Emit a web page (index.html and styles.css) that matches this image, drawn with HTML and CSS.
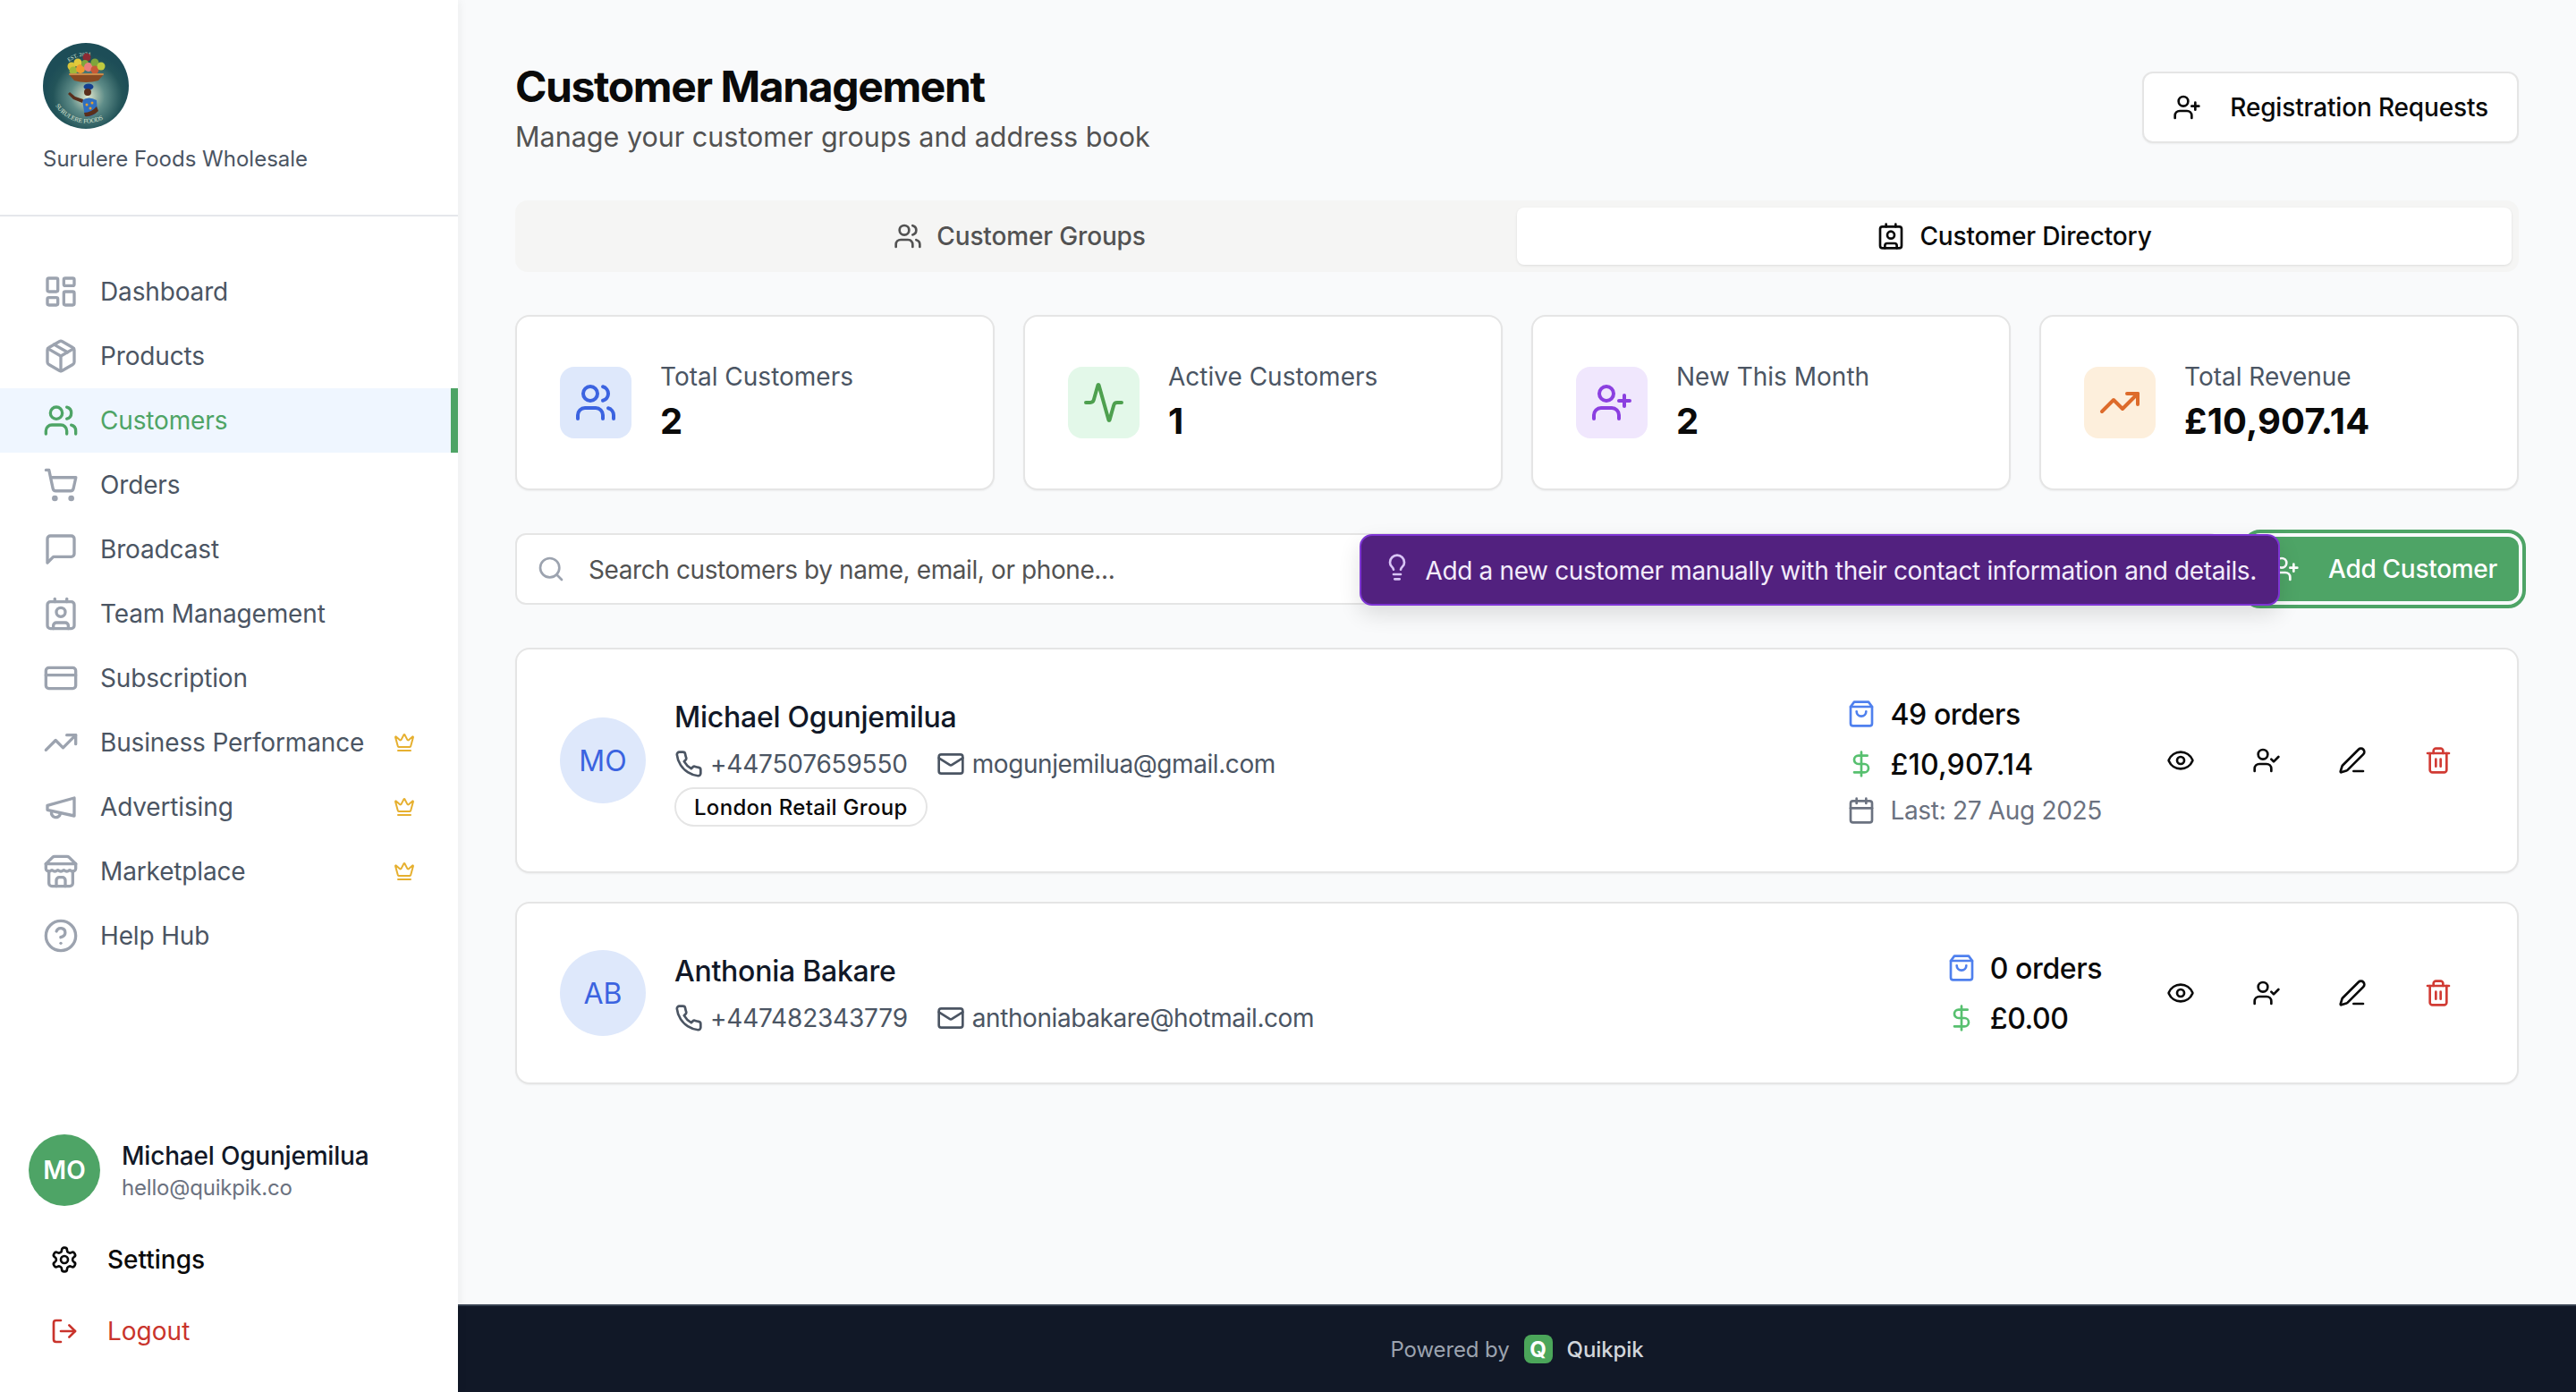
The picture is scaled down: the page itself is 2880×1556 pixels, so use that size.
FILE: index.html
```html
<!DOCTYPE html>
<html lang="en">
<head>
    <meta charset="UTF-8">
    <meta name="viewport" content="width=device-width, initial-scale=1.0">
    <title>Customer Management</title>
    <link rel="stylesheet" href="styles.css">
</head>
<body>
    <!-- Icon sprite -->
    <svg class="sprite" xmlns="http://www.w3.org/2000/svg">
        <symbol id="i-dashboard" viewBox="0 0 24 24"><rect width="7" height="9" x="3" y="3" rx="1"/><rect width="7" height="5" x="14" y="3" rx="1"/><rect width="7" height="9" x="14" y="12" rx="1"/><rect width="7" height="5" x="3" y="16" rx="1"/></symbol>
        <symbol id="i-package" viewBox="0 0 24 24"><path d="m7.5 4.27 9 5.15"/><path d="M21 8a2 2 0 0 0-1-1.73l-7-4a2 2 0 0 0-2 0l-7 4A2 2 0 0 0 3 8v8a2 2 0 0 0 1 1.73l7 4a2 2 0 0 0 2 0l7-4A2 2 0 0 0 21 16Z"/><path d="m3.3 7 8.7 5 8.7-5"/><path d="M12 22V12"/></symbol>
        <symbol id="i-users" viewBox="0 0 24 24"><path d="M16 21v-2a4 4 0 0 0-4-4H6a4 4 0 0 0-4 4v2"/><circle cx="9" cy="7" r="4"/><path d="M22 21v-2a4 4 0 0 0-3-3.87"/><path d="M16 3.13a4 4 0 0 1 0 7.75"/></symbol>
        <symbol id="i-cart" viewBox="0 0 24 24"><circle cx="8" cy="21" r="1"/><circle cx="19" cy="21" r="1"/><path d="M2.05 2.05h2l2.66 12.42a2 2 0 0 0 2 1.58h9.78a2 2 0 0 0 1.95-1.57l1.65-7.43H5.12"/></symbol>
        <symbol id="i-message" viewBox="0 0 24 24"><path d="M21 15a2 2 0 0 1-2 2H7l-4 4V5a2 2 0 0 1 2-2h14a2 2 0 0 1 2 2z"/></symbol>
        <symbol id="i-contact" viewBox="0 0 24 24"><path d="M16 2v2"/><path d="M7 22v-2a2 2 0 0 1 2-2h6a2 2 0 0 1 2 2v2"/><path d="M8 2v2"/><circle cx="12" cy="11" r="3"/><rect width="18" height="18" x="3" y="4" rx="2"/></symbol>
        <symbol id="i-card" viewBox="0 0 24 24"><rect width="20" height="14" x="2" y="5" rx="2"/><line x1="2" x2="22" y1="10" y2="10"/></symbol>
        <symbol id="i-trending" viewBox="0 0 24 24"><polyline points="22 7 13.5 15.5 8.5 10.5 2 17"/><polyline points="16 7 22 7 22 13"/></symbol>
        <symbol id="i-megaphone" viewBox="0 0 24 24"><path d="m3 11 18-5v12L3 14v-3z"/><path d="M11.6 16.8a3 3 0 1 1-5.8-1.6"/></symbol>
        <symbol id="i-store" viewBox="0 0 24 24"><path d="m2 7 4.41-4.41A2 2 0 0 1 7.83 2h8.34a2 2 0 0 1 1.42.59L22 7"/><path d="M4 12v8a2 2 0 0 0 2 2h12a2 2 0 0 0 2-2v-8"/><path d="M15 22v-4a2 2 0 0 0-2-2h-2a2 2 0 0 0-2 2v4"/><path d="M2 7h20"/><path d="M22 7v3a2 2 0 0 1-2 2a2.7 2.7 0 0 1-1.59-.63.7.7 0 0 0-.82 0A2.7 2.7 0 0 1 16 12a2.7 2.7 0 0 1-1.59-.63.7.7 0 0 0-.82 0A2.7 2.7 0 0 1 12 12a2.7 2.7 0 0 1-1.59-.63.7.7 0 0 0-.82 0A2.7 2.7 0 0 1 8 12a2.7 2.7 0 0 1-1.59-.63.7.7 0 0 0-.82 0A2.7 2.7 0 0 1 4 12a2 2 0 0 1-2-2V7"/></symbol>
        <symbol id="i-help" viewBox="0 0 24 24"><circle cx="12" cy="12" r="10"/><path d="M9.09 9a3 3 0 0 1 5.83 1c0 2-3 3-3 3"/><path d="M12 17h.01"/></symbol>
        <symbol id="i-crown" viewBox="0 0 24 24"><path d="M11.562 3.266a.5.5 0 0 1 .876 0L15.39 8.87a1 1 0 0 0 1.516.294L21.183 5.5a.5.5 0 0 1 .798.519l-2.834 10.246a1 1 0 0 1-.956.734H5.81a1 1 0 0 1-.957-.734L2.02 6.02a.5.5 0 0 1 .798-.519l4.276 3.664a1 1 0 0 0 1.516-.294z"/><path d="M5 21h14"/></symbol>
        <symbol id="i-settings" viewBox="0 0 24 24"><path d="M12.22 2h-.44a2 2 0 0 0-2 2v.18a2 2 0 0 1-1 1.73l-.43.25a2 2 0 0 1-2 0l-.15-.08a2 2 0 0 0-2.73.73l-.22.38a2 2 0 0 0 .73 2.73l.15.1a2 2 0 0 1 1 1.72v.51a2 2 0 0 1-1 1.74l-.15.09a2 2 0 0 0-.73 2.73l.22.38a2 2 0 0 0 2.73.73l.15-.08a2 2 0 0 1 2 0l.43.25a2 2 0 0 1 1 1.73V20a2 2 0 0 0 2 2h.44a2 2 0 0 0 2-2v-.18a2 2 0 0 1 1-1.73l.43-.25a2 2 0 0 1 2 0l.15.08a2 2 0 0 0 2.73-.73l.22-.39a2 2 0 0 0-.73-2.73l-.15-.08a2 2 0 0 1-1-1.74v-.5a2 2 0 0 1 1-1.74l.15-.09a2 2 0 0 0 .73-2.73l-.22-.38a2 2 0 0 0-2.73-.73l-.15.08a2 2 0 0 1-2 0l-.43-.25a2 2 0 0 1-1-1.73V4a2 2 0 0 0-2-2z"/><circle cx="12" cy="12" r="3"/></symbol>
        <symbol id="i-logout" viewBox="0 0 24 24"><path d="M9 21H5a2 2 0 0 1-2-2V5a2 2 0 0 1 2-2h4"/><polyline points="16 17 21 12 16 7"/><line x1="21" x2="9" y1="12" y2="12"/></symbol>
        <symbol id="i-user-plus" viewBox="0 0 24 24"><path d="M16 21v-2a4 4 0 0 0-4-4H6a4 4 0 0 0-4 4v2"/><circle cx="9" cy="7" r="4"/><line x1="19" x2="19" y1="8" y2="14"/><line x1="22" x2="16" y1="11" y2="11"/></symbol>
        <symbol id="i-user-check" viewBox="0 0 24 24"><path d="M16 21v-2a4 4 0 0 0-4-4H6a4 4 0 0 0-4 4v2"/><circle cx="9" cy="7" r="4"/><polyline points="16 11 18 13 22 9"/></symbol>
        <symbol id="i-activity" viewBox="0 0 24 24"><path d="M22 12h-2.48a2 2 0 0 0-1.93 1.46l-2.35 8.36a.25.25 0 0 1-.48 0L9.24 2.18a.25.25 0 0 0-.48 0l-2.35 8.36A2 2 0 0 1 4.49 12H2"/></symbol>
        <symbol id="i-search" viewBox="0 0 24 24"><circle cx="11" cy="11" r="8"/><path d="m21 21-4.3-4.3"/></symbol>
        <symbol id="i-bulb" viewBox="0 0 24 24"><path d="M15 14c.2-1 .7-1.7 1.5-2.5 1-.9 1.5-2.2 1.5-3.5A6 6 0 0 0 6 8c0 1 .2 2.2 1.5 3.5.7.7 1.3 1.5 1.5 2.5"/><path d="M9 18h6"/><path d="M10 22h4"/></symbol>
        <symbol id="i-phone" viewBox="0 0 24 24"><path d="M22 16.92v3a2 2 0 0 1-2.18 2 19.79 19.79 0 0 1-8.63-3.07 19.5 19.5 0 0 1-6-6 19.79 19.79 0 0 1-3.07-8.67A2 2 0 0 1 4.11 2h3a2 2 0 0 1 2 1.72 12.84 12.84 0 0 0 .7 2.81 2 2 0 0 1-.45 2.11L8.09 9.91a16 16 0 0 0 6 6l1.27-1.27a2 2 0 0 1 2.11-.45 12.84 12.84 0 0 0 2.81.7A2 2 0 0 1 22 16.92z"/></symbol>
        <symbol id="i-mail" viewBox="0 0 24 24"><rect width="20" height="16" x="2" y="4" rx="2"/><path d="m22 7-8.97 5.7a1.94 1.94 0 0 1-2.06 0L2 7"/></symbol>
        <symbol id="i-bag" viewBox="0 0 24 24"><path d="M6 2 3 6v14a2 2 0 0 0 2 2h14a2 2 0 0 0 2-2V6l-3-4Z"/><path d="M3 6h18"/><path d="M16 10a4 4 0 0 1-8 0"/></symbol>
        <symbol id="i-dollar" viewBox="0 0 24 24"><line x1="12" x2="12" y1="2" y2="22"/><path d="M17 5H9.5a3.5 3.5 0 0 0 0 7h5a3.5 3.5 0 0 1 0 7H6"/></symbol>
        <symbol id="i-calendar" viewBox="0 0 24 24"><path d="M8 2v4"/><path d="M16 2v4"/><rect width="18" height="18" x="3" y="4" rx="2"/><path d="M3 10h18"/></symbol>
        <symbol id="i-eye" viewBox="0 0 24 24"><path d="M2.062 12.348a1 1 0 0 1 0-.696 10.75 10.75 0 0 1 19.876 0 1 1 0 0 1 0 .696 10.75 10.75 0 0 1-19.876 0"/><circle cx="12" cy="12" r="3"/></symbol>
        <symbol id="i-pen" viewBox="0 0 24 24"><path d="M13 21h8"/><path d="M21.174 6.812a1 1 0 0 0-3.986-3.987L3.842 16.174a2 2 0 0 0-.5.83l-1.321 4.352a.5.5 0 0 0 .623.622l4.353-1.32a2 2 0 0 0 .83-.497z"/></symbol>
        <symbol id="i-trash" viewBox="0 0 24 24"><path d="M3 6h18"/><path d="M19 6v14c0 1-1 2-2 2H7c-1 0-2-1-2-2V6"/><path d="M8 6V4c0-1 1-2 2-2h4c1 0 2 1 2 2v2"/><line x1="10" x2="10" y1="11" y2="17"/><line x1="14" x2="14" y1="11" y2="17"/></symbol>
    </svg>

    <div class="app">
        <aside class="sidebar">
            <div class="brand">
                <svg class="brand-logo" viewBox="0 0 96 96" xmlns="http://www.w3.org/2000/svg">
                    <defs>
                        <radialGradient id="logo-bg" cx="52%" cy="62%" r="50%">
                            <stop offset="0" stop-color="#dfe6cc"/>
                            <stop offset="0.4" stop-color="#5e8c88"/>
                            <stop offset="0.8" stop-color="#235459"/>
                            <stop offset="1" stop-color="#1d4d57"/>
                        </radialGradient>
                        <path id="logo-top" d="M29 21 A32 32 0 0 1 68 21"/>
                        <path id="logo-bottom" d="M14 70 A41 41 0 0 0 85 68"/>
                    </defs>
                    <circle cx="48" cy="48" r="48" fill="url(#logo-bg)"/>
                    <text class="logo-text" font-size="6"><textPath href="#logo-top">EST. 2024</textPath></text>
                    <circle cx="32" cy="26" r="4.5" fill="#d9c53a"/>
                    <circle cx="34" cy="31" r="4.5" fill="#9fb83a"/>
                    <circle cx="39" cy="22" r="4.5" fill="#e2c93b"/>
                    <circle cx="42" cy="29" r="5" fill="#ee9b2e"/>
                    <circle cx="49" cy="16" r="4.5" fill="#8c2a33"/>
                    <circle cx="47" cy="23" r="4" fill="#7fa53b"/>
                    <circle cx="51" cy="27" r="5" fill="#e87e7e"/>
                    <circle cx="58" cy="22" r="4.5" fill="#7fa53b"/>
                    <circle cx="58" cy="30" r="4.5" fill="#c85a36"/>
                    <circle cx="65" cy="26" r="4.5" fill="#bfca3f"/>
                    <path d="M29 35 H68 L62 42 Q48 46 35 42 Z" fill="#8a4a22"/>
                    <rect x="29" y="34" width="39" height="2" rx="1" fill="#c98a4a"/>
                    <ellipse cx="51" cy="49" rx="5.5" ry="3.5" fill="#143f8f"/>
                    <circle cx="50" cy="55" r="4" fill="#5a2f1c"/>
                    <path d="M44 64 Q51 59 60 64 L61 76 Q56 84 47 82 Z" fill="#2f6fc0"/>
                    <path d="M44 67 L34 63 L28 57 L30 55 L36 60 L45 63 Z" fill="#5a2f1c"/>
                    <path d="M46 78 Q54 78 60 71 L62 76 Q55 83 47 82 Z" fill="#5a2f1c"/>
                    <circle cx="49" cy="69" r="1.5" fill="#e6a02c"/>
                    <circle cx="55" cy="67" r="1.5" fill="#e6a02c"/>
                    <circle cx="53" cy="73" r="1.5" fill="#e6a02c"/>
                    <text class="logo-text" font-size="7"><textPath href="#logo-bottom">SURULERE FOODS</textPath></text>
                </svg>
                <p class="brand-name">Surulere Foods Wholesale</p>
            </div>

            <nav class="nav">
                <a class="nav-item"><svg class="icon"><use href="#i-dashboard"/></svg><span>Dashboard</span></a>
                <a class="nav-item"><svg class="icon"><use href="#i-package"/></svg><span>Products</span></a>
                <a class="nav-item active"><svg class="icon"><use href="#i-users"/></svg><span>Customers</span></a>
                <a class="nav-item"><svg class="icon"><use href="#i-cart"/></svg><span>Orders</span></a>
                <a class="nav-item"><svg class="icon"><use href="#i-message"/></svg><span>Broadcast</span></a>
                <a class="nav-item"><svg class="icon"><use href="#i-contact"/></svg><span>Team Management</span></a>
                <a class="nav-item"><svg class="icon"><use href="#i-card"/></svg><span>Subscription</span></a>
                <a class="nav-item"><svg class="icon"><use href="#i-trending"/></svg><span>Business Performance</span><svg class="crown"><use href="#i-crown"/></svg></a>
                <a class="nav-item"><svg class="icon"><use href="#i-megaphone"/></svg><span>Advertising</span><svg class="crown"><use href="#i-crown"/></svg></a>
                <a class="nav-item"><svg class="icon"><use href="#i-store"/></svg><span>Marketplace</span><svg class="crown"><use href="#i-crown"/></svg></a>
                <a class="nav-item"><svg class="icon"><use href="#i-help"/></svg><span>Help Hub</span></a>
            </nav>

            <div class="account">
                <div class="profile">
                    <div class="profile-avatar">MO</div>
                    <div>
                        <div class="profile-name">Michael Ogunjemilua</div>
                        <div class="profile-email">hello@quikpik.co</div>
                    </div>
                </div>
                <a class="account-link"><svg class="icon-sm"><use href="#i-settings"/></svg><span>Settings</span></a>
                <a class="account-link logout"><svg class="icon-sm"><use href="#i-logout"/></svg><span>Logout</span></a>
            </div>
        </aside>

        <div class="main">
            <main class="content">
                <header class="page-header">
                    <div>
                        <h1>Customer Management</h1>
                        <p class="subtitle">Manage your customer groups and address book</p>
                    </div>
                    <button class="btn-outline"><svg class="icon-sm"><use href="#i-user-plus"/></svg>Registration Requests</button>
                </header>

                <div class="tabs">
                    <div class="tab"><svg class="icon-sm"><use href="#i-users"/></svg>Customer Groups</div>
                    <div class="tab active"><svg class="icon-sm"><use href="#i-contact"/></svg>Customer Directory</div>
                </div>

                <section class="stats">
                    <div class="stat-card">
                        <div class="stat-icon blue"><svg class="icon-lg"><use href="#i-users"/></svg></div>
                        <div><div class="stat-label">Total Customers</div><div class="stat-value">2</div></div>
                    </div>
                    <div class="stat-card">
                        <div class="stat-icon green"><svg class="icon-lg"><use href="#i-activity"/></svg></div>
                        <div><div class="stat-label">Active Customers</div><div class="stat-value">1</div></div>
                    </div>
                    <div class="stat-card">
                        <div class="stat-icon purple"><svg class="icon-lg"><use href="#i-user-plus"/></svg></div>
                        <div><div class="stat-label">New This Month</div><div class="stat-value">2</div></div>
                    </div>
                    <div class="stat-card">
                        <div class="stat-icon orange"><svg class="icon-lg"><use href="#i-trending"/></svg></div>
                        <div><div class="stat-label">Total Revenue</div><div class="stat-value">£10,907.14</div></div>
                    </div>
                </section>

                <div class="toolbar">
                    <div class="search">
                        <svg class="icon-sm"><use href="#i-search"/></svg>
                        <span>Search customers by name, email, or phone...</span>
                    </div>
                    <div class="add-wrap">
                        <button class="btn-add"><svg class="icon-sm"><use href="#i-user-plus"/></svg>Add Customer</button>
                        <div class="tooltip">
                            <svg class="icon-sm"><use href="#i-bulb"/></svg>
                            <span>Add a new customer manually with their contact information and details.</span>
                        </div>
                    </div>
                </div>

                <section class="customers">
                    <article class="customer-card">
                        <div class="customer-avatar">MO</div>
                        <div class="customer-info">
                            <div class="customer-name">Michael Ogunjemilua</div>
                            <div class="customer-contact">
                                <span class="contact-item phone"><svg class="icon-sm"><use href="#i-phone"/></svg>+447507659550</span>
                                <span class="contact-item email"><svg class="icon-sm"><use href="#i-mail"/></svg>mogunjemilua@gmail.com</span>
                            </div>
                            <span class="badge">London Retail Group</span>
                        </div>
                        <div class="customer-stats">
                            <div class="metric"><svg class="icon-sm bag"><use href="#i-bag"/></svg>49 orders</div>
                            <div class="metric total"><svg class="icon-sm dollar"><use href="#i-dollar"/></svg>£10,907.14</div>
                            <div class="metric last"><svg class="icon-sm"><use href="#i-calendar"/></svg>Last: 27 Aug 2025</div>
                        </div>
                        <div class="actions">
                            <button class="action"><svg class="icon-sm"><use href="#i-eye"/></svg></button>
                            <button class="action"><svg class="icon-sm"><use href="#i-user-check"/></svg></button>
                            <button class="action"><svg class="icon-sm"><use href="#i-pen"/></svg></button>
                            <button class="action danger"><svg class="icon-sm"><use href="#i-trash"/></svg></button>
                        </div>
                    </article>

                    <article class="customer-card">
                        <div class="customer-avatar">AB</div>
                        <div class="customer-info">
                            <div class="customer-name">Anthonia Bakare</div>
                            <div class="customer-contact">
                                <span class="contact-item phone"><svg class="icon-sm"><use href="#i-phone"/></svg>+447482343779</span>
                                <span class="contact-item email"><svg class="icon-sm"><use href="#i-mail"/></svg>anthoniabakare@hotmail.com</span>
                            </div>
                        </div>
                        <div class="customer-stats">
                            <div class="metric"><svg class="icon-sm bag"><use href="#i-bag"/></svg>0 orders</div>
                            <div class="metric"><svg class="icon-sm dollar"><use href="#i-dollar"/></svg>£0.00</div>
                        </div>
                        <div class="actions">
                            <button class="action"><svg class="icon-sm"><use href="#i-eye"/></svg></button>
                            <button class="action"><svg class="icon-sm"><use href="#i-user-check"/></svg></button>
                            <button class="action"><svg class="icon-sm"><use href="#i-pen"/></svg></button>
                            <button class="action danger"><svg class="icon-sm"><use href="#i-trash"/></svg></button>
                        </div>
                    </article>
                </section>
            </main>

            <footer class="footer">
                <span class="powered">Powered by</span>
                <span class="footer-logo">Q</span>
                <span class="footer-brand">Quikpik</span>
            </footer>
        </div>
    </div>
</body>
</html>
```

FILE: styles.css
```css
* {
    box-sizing: border-box;
}

body {
    font-family: Inter, "Liberation Sans", sans-serif;
    background: #f9fafb;
    color: #0a0a0a;
    margin: 0;
    height: 100vh;
    overflow: hidden;
}

h1, p {
    margin: 0;
}

button {
    font-family: inherit;
    cursor: pointer;
}

.sprite {
    display: none;
}

.icon, .icon-sm, .icon-lg, .crown {
    fill: none;
    stroke: currentColor;
    stroke-width: 2;
    stroke-linecap: round;
    stroke-linejoin: round;
    flex-shrink: 0;
}

.icon {
    width: 40px;
    height: 40px;
    color: #9ca3af;
}

.icon-sm {
    width: 32px;
    height: 32px;
}

.icon-lg {
    width: 48px;
    height: 48px;
}

.app {
    display: flex;
    height: 100%;
}

/* Sidebar */
.sidebar {
    width: 512px;
    flex-shrink: 0;
    background: white;
    display: flex;
    flex-direction: column;
    box-shadow: 2px 0 10px rgba(0, 0, 0, 0.05);
    z-index: 1;
}

.brand {
    height: 242px;
    padding: 48px 48px 0;
    border-bottom: 2px solid #e5e7eb;
}

.brand-logo {
    display: block;
    width: 96px;
    height: 96px;
}

.logo-text {
    font-family: "Liberation Serif", serif;
    fill: #dfe8d8;
}

.brand-name {
    margin-top: 18px;
    font-size: 24px;
    line-height: 32px;
    color: #4b5563;
}

.nav {
    padding-top: 48px;
}

.nav-item {
    display: flex;
    align-items: center;
    gap: 24px;
    height: 72px;
    padding: 0 48px;
    font-size: 28px;
    letter-spacing: -0.15px;
    color: #4b5563;
}

.nav-item.active {
    background: #eff6ff;
    color: #4ea466;
    border-right: 8px solid #4ea466;
}

.nav-item.active .icon {
    color: #4ea466;
}

.crown {
    width: 24px;
    height: 24px;
    margin-left: auto;
    color: #e6b030;
}

.account {
    margin-top: auto;
    padding: 0 32px 28px;
}

.profile {
    display: flex;
    align-items: center;
    gap: 24px;
    margin-bottom: 20px;
}

.profile-avatar {
    width: 80px;
    height: 80px;
    border-radius: 50%;
    background: #4ea466;
    color: white;
    font-size: 28px;
    font-weight: 600;
    display: flex;
    align-items: center;
    justify-content: center;
}

.profile-name {
    font-size: 28px;
    line-height: 40px;
    font-weight: 500;
    letter-spacing: -0.2px;
    color: #111827;
}

.profile-email {
    font-size: 24px;
    line-height: 32px;
    letter-spacing: -0.2px;
    color: #6b7280;
}

.account-link {
    display: flex;
    align-items: center;
    gap: 32px;
    height: 80px;
    padding: 0 24px;
    font-size: 28px;
    font-weight: 500;
}

.account-link.logout {
    color: #c9342c;
    font-weight: 400;
}

/* Main column */
.main {
    flex: 1;
    min-width: 0;
    display: flex;
    flex-direction: column;
}

.content {
    flex: 1;
    padding: 64px 64px 0;
}

.page-header {
    display: flex;
    justify-content: space-between;
    align-items: center;
    margin-bottom: 48px;
}

h1 {
    font-size: 48px;
    line-height: 66px;
    font-weight: 700;
    letter-spacing: -1.4px;
}

.subtitle {
    font-size: 30.5px;
    line-height: 46px;
    color: #525252;
}

.btn-outline {
    display: flex;
    align-items: center;
    gap: 32px;
    height: 80px;
    padding: 0 32px;
    background: white;
    border: 2px solid #e5e5e5;
    border-radius: 12px;
    box-shadow: 0 1px 2px rgba(0, 0, 0, 0.05);
    font-size: 28px;
    font-weight: 500;
    letter-spacing: -0.15px;
    color: #0a0a0a;
}

.tabs {
    display: grid;
    grid-template-columns: 1fr 1fr;
    height: 80px;
    padding: 8px;
    background: #f5f5f4;
    border-radius: 14px;
    margin-bottom: 48px;
}

.tab {
    display: flex;
    align-items: center;
    justify-content: center;
    gap: 16px;
    font-size: 28px;
    font-weight: 500;
    letter-spacing: -0.15px;
    color: #525252;
    border-radius: 8px;
}

.tab.active {
    background: white;
    color: #0a0a0a;
    box-shadow: 0 1px 3px rgba(0, 0, 0, 0.1);
}

.stats {
    display: grid;
    grid-template-columns: repeat(4, 1fr);
    gap: 32px;
    margin-bottom: 48px;
}

.stat-card {
    display: flex;
    align-items: center;
    gap: 32px;
    height: 196px;
    padding: 0 48px;
    background: white;
    border: 2px solid #e5e5e5;
    border-radius: 16px;
    box-shadow: 0 1px 2px rgba(0, 0, 0, 0.05);
}

.stat-icon {
    width: 80px;
    height: 80px;
    border-radius: 16px;
    display: flex;
    align-items: center;
    justify-content: center;
}

.stat-icon.blue {
    background: #dee8fb;
    color: #3b63e0;
}

.stat-icon.green {
    background: #e3f8e9;
    color: #4ea04f;
}

.stat-icon.purple {
    background: #f0e7fd;
    color: #8b3fe0;
}

.stat-icon.orange {
    background: #fdefdc;
    color: #dd6b2b;
}

.stat-label {
    font-size: 28px;
    line-height: 42px;
    color: #4b5563;
}

.stat-value {
    font-size: 40px;
    line-height: 58px;
    font-weight: 700;
    letter-spacing: 0.14px;
}

.toolbar {
    display: flex;
    gap: 32px;
    margin-bottom: 48px;
}

.search {
    flex: 1;
    display: flex;
    align-items: center;
    gap: 26px;
    height: 80px;
    padding: 2px 22px 0;
    background: white;
    border: 2px solid #e5e5e5;
    border-radius: 12px;
    font-size: 28px;
    letter-spacing: -0.4px;
    color: #525252;
}

.search .icon-sm {
    color: #9ca3af;
    margin-top: -2px;
}

.add-wrap {
    position: relative;
    display: flex;
    align-items: center;
}

.btn-add {
    display: flex;
    align-items: center;
    gap: 32px;
    height: 72px;
    padding: 0 24px;
    background: #4ea466;
    border: none;
    border-radius: 12px;
    outline: 4px solid #4ea466;
    outline-offset: 4px;
    font-size: 28px;
    font-weight: 500;
    letter-spacing: -0.3px;
    color: white;
}

.tooltip {
    position: absolute;
    right: 267px;
    top: 1px;
    display: flex;
    align-items: flex-start;
    gap: 16px;
    height: 80px;
    padding: 19px 24px 0;
    background: #52217f;
    border: 2px solid #7e35d4;
    border-radius: 14px;
    box-shadow: 0 10px 24px rgba(0, 0, 0, 0.12);
    font-size: 28px;
    line-height: 40px;
    letter-spacing: -0.36px;
    white-space: nowrap;
    color: #f3ecfc;
}

.tooltip .icon-sm {
    color: #d8c4f5;
}

.customers {
    display: flex;
    flex-direction: column;
    gap: 32px;
}

.customer-card {
    display: flex;
    align-items: center;
    padding: 48px;
    background: white;
    border: 2px solid #e5e5e5;
    border-radius: 16px;
    box-shadow: 0 1px 2px rgba(0, 0, 0, 0.05);
}

.customer-avatar {
    width: 96px;
    height: 96px;
    border-radius: 50%;
    background: #dee8fb;
    color: #3b63e0;
    font-size: 32px;
    display: flex;
    align-items: center;
    justify-content: center;
    margin-right: 32px;
    flex-shrink: 0;
}

.customer-info {
    flex: 1;
    min-width: 0;
}

.customer-name {
    font-size: 32px;
    line-height: 56px;
    font-weight: 500;
    letter-spacing: -0.25px;
    color: #111827;
}

.customer-contact {
    display: flex;
    gap: 32px;
    height: 48px;
    align-items: center;
    font-size: 28px;
    color: #4b5563;
}

.contact-item {
    display: flex;
    align-items: center;
    gap: 8px;
}

.contact-item.phone {
    letter-spacing: -0.2px;
}

.contact-item.email {
    letter-spacing: -0.42px;
}

.badge {
    display: flex;
    align-items: center;
    width: fit-content;
    height: 44px;
    padding: 0 20px;
    margin: 2px 0;
    border: 2px solid #e5e5e5;
    border-radius: 22px;
    font-size: 24px;
    font-weight: 500;
    letter-spacing: 0.3px;
}

.customer-stats {
    display: flex;
    flex-direction: column;
    gap: 8px;
    margin-right: 48px;
}

.metric {
    display: flex;
    align-items: center;
    gap: 16px;
    height: 48px;
    font-size: 32px;
    font-weight: 500;
    letter-spacing: -0.4px;
}

.metric.total {
    letter-spacing: 0.2px;
}

.metric.last {
    height: 40px;
    font-size: 28px;
    font-weight: 400;
    letter-spacing: -0.32px;
    color: #6b7280;
}

.bag {
    color: #4f80ee;
}

.dollar {
    color: #57c06f;
}

.actions {
    display: flex;
    gap: 16px;
}

.action {
    width: 80px;
    height: 80px;
    border: none;
    background: none;
    padding: 0;
    color: #0a0a0a;
    display: flex;
    align-items: center;
    justify-content: center;
}

.action.danger {
    color: #d13b34;
}

.footer {
    display: flex;
    align-items: center;
    justify-content: center;
    gap: 16px;
    height: 98px;
    background: #111827;
    border-top: 2px solid #374151;
    font-size: 24px;
    letter-spacing: -0.1px;
}

.powered {
    color: #9ca3af;
}

.footer-logo {
    width: 32px;
    height: 32px;
    border-radius: 8px;
    background: #4ba65a;
    color: white;
    font-size: 24px;
    font-weight: 700;
    display: flex;
    align-items: center;
    justify-content: center;
}

.footer-brand {
    color: #d1d5db;
    font-weight: 500;
}
```
